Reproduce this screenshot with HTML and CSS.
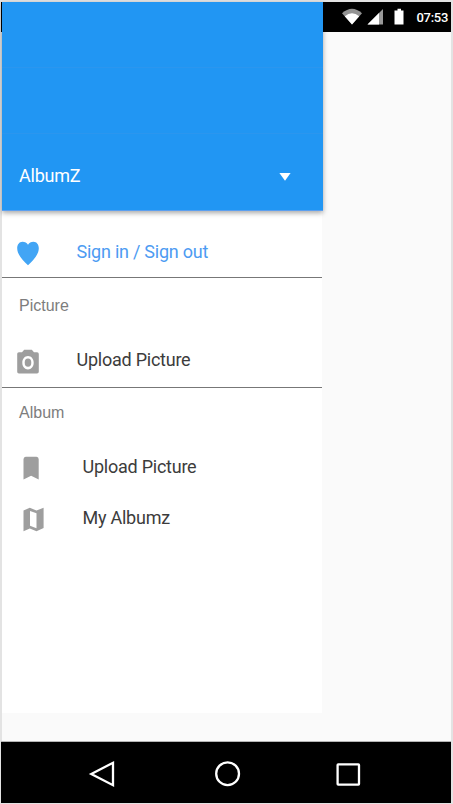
FILE: index.html
```html
<!DOCTYPE html>
<html lang="en">
<head>
<meta charset="utf-8">
<title>AlbumZ</title>
<link rel="stylesheet" href="styles.css">
</head>
<body>
<div class="phone">
  <header class="status">
    <svg class="status-icons" width="64" height="20" viewBox="0 0 64 20">
      <path d="M0 6.2Q10 -2.8 20 6.2L10 17.5Z" fill="#939393"/>
      <path d="M2.8 9.2Q10 3.2 17.2 9.2L10 17.5Z" fill="#fff"/>
      <path d="M25.500 17.500L41 2V17.500Z" fill="#999"/>
      <path d="M25.500 17.500L37 6V17.500Z" fill="#fff"/>
      <path d="M55.500 1.800h3.500v1.700h2.500v14h-9v-14h3z" fill="#fff"/>
    </svg>
    <span class="clock">07:53</span>
  </header>
  <main class="screen"></main>
  <nav class="navbar">
    <svg width="450" height="61" viewBox="0 0 450 61" fill="none" stroke="#fff" stroke-width="2.300">
      <path d="M90.300 32L112 20.800V43.200Z"/>
      <circle cx="226.600" cy="31.700" r="11.400"/>
      <rect x="336.600" y="22.300" width="21.400" height="20.400" rx=".6"/>
    </svg>
  </nav>
  <aside class="drawer">
    <div class="appbars">
      <div class="bar"></div>
      <div class="bar"></div>
      <div class="bar account">
        <span>AlbumZ</span>
        <svg width="12" height="8" viewBox="0 0 12 8"><path d="M.4 0h11.200L6 7.700z" fill="#fff"/></svg>
      </div>
    </div>
    <div class="item sign">
      <svg class="icon" width="24" height="26" viewBox="0 0 24 26"><path d="M12 25.300C7 20.500 1.200 14.800 1.200 8.300C1.200 4.500 3.300 1.700 6.500 1.700C8.900 1.700 11 2.700 12 4.800C13 2.700 15.100 1.700 17.500 1.700C20.700 1.700 22.800 4.500 22.800 8.300C22.800 14.800 17 20.500 12 25.300Z" fill="#42a5f5"/></svg>
      <span>Sign in / Sign out</span>
    </div>
    <h2 class="group picture">Picture</h2>
    <div class="item upload">
      <svg class="icon" width="24" height="26" viewBox="0 0 24 26"><path fill-rule="evenodd" d="M8.200 .7h7.600L18 3.300h3c1.200 0 1.800 .8 1.800 1.900v17.300c0 1.300-.7 2-1.800 2H3c-1.200 0-1.800-.7-1.800-2V5.200c0-1.100.6-1.900 1.800-1.900h3zM12 7c-3.300 0-5.700 2.900-5.700 6.700s2.400 6.700 5.700 6.700 5.700-2.900 5.700-6.700S15.300 7 12 7z" fill="#9e9e9e"/><ellipse cx="12" cy="13.700" rx="3.300" ry="4.100" fill="#9e9e9e"/></svg>
      <span>Upload Picture</span>
    </div>
    <h2 class="group album">Album</h2>
    <div class="item inset">
      <svg class="icon" width="24" height="26" viewBox="0 0 24 26"><path d="M3.500 24.500V4.200q0-2.500 2.200-2.500h10.800q2.200 0 2.200 2.500v20.300L11.100 20.800z" fill="#9e9e9e"/></svg>
      <span>Upload Picture</span>
    </div>
    <div class="item inset">
      <svg class="icon" width="24" height="26" viewBox="0 0 24 26"><path fill-rule="evenodd" d="M9.800 1.800L16.500 4.500L23.600 1.800V22L16.500 25.200L9.800 22.500L3.500 25.200V4.500zM10 5V19.800L16.500 22.300V7.300z" fill="#9e9e9e"/></svg>
      <span>My Albumz</span>
    </div>
  </aside>
</div>
</body>
</html>
```
FILE: styles.css
```css
* { box-sizing: border-box; }
body {
  margin: 0;
  background: #e3e3e3;
  font-family: Roboto, "Liberation Sans", sans-serif;
}
.phone {
  position: relative;
  display: flex;
  flex-direction: column;
  width: 453px;
  height: 804px;
  padding: 2px 2px 1px 1px;
  overflow: hidden;
}
.status {
  display: flex;
  justify-content: flex-end;
  align-items: center;
  height: 30px;
  padding-right: 3px;
  background: #000;
  color: #fff;
}
.status-icons { margin-right: 11px; margin-top: -1px; }
.clock {
  font-size: 13px;
  font-weight: 500;
  letter-spacing: -.3px;
  line-height: 30px;
  margin-top: 2px;
}
.screen { flex: 1; margin-left: 1px; background: #fafafa; }
.navbar {
  height: 62px;
  border-top: 1px solid #b5b5b5;
  background: #000;
  background-clip: padding-box;
}
.navbar svg { display: block; }
.drawer {
  position: absolute;
  left: 2px;
  top: 2px;
  width: 320px;
  height: 711px;
  background: #fff;
  font-size: 18px;
  letter-spacing: -.24px;
}
.appbars {
  width: 321.500px;
  margin-left: -.5px;
  background: #2196f3;
  box-shadow: 0 2px 5px rgba(0, 0, 0, .35);
}
.bar { height: 66px; border-bottom: 1px solid #2b96ef; }
.account {
  display: flex;
  justify-content: space-between;
  align-items: center;
  height: 77px;
  padding: 6px 32px 0 17.500px;
  border-bottom-color: #5c9fef;
  color: #fff;
}
.account svg { margin-top: 3px; }
.item {
  display: flex;
  align-items: center;
  height: 51px;
  padding-left: 14px;
  color: #3c3c3c;
}
.icon { flex: none; margin-right: 36.500px; }
.sign {
  height: 67px;
  padding-top: 15px;
  border-bottom: 1px solid #777;
  color: #4d9bf2;
}
.sign .icon { margin-top: 3px; }
.group {
  margin: 0;
  padding-left: 17px;
  color: #7d7d7d;
  font: 400 16px/20px "Liberation Sans", sans-serif;
  letter-spacing: 0;
}
.picture { height: 55px; padding-top: 18px; }
.upload { height: 55px; padding-bottom: 1px; border-bottom: 1px solid #777; }
.upload .icon { margin-top: 4px; }
.album { height: 53px; padding-top: 15px; }
.inset { padding-left: 18px; }
.inset .icon { margin-right: 38.500px; margin-top: 3px; }
```
